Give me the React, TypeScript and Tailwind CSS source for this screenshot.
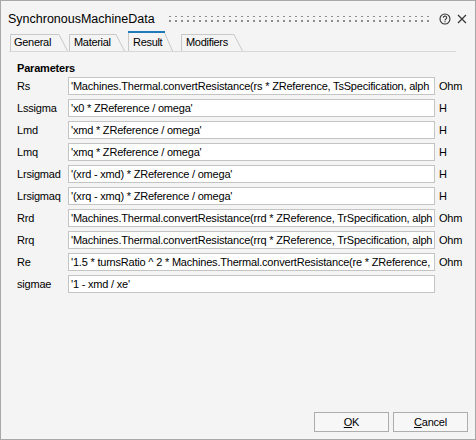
import React from "react";

const rows: [string, string, string][] = [
  ["Rs", "'Machines.Thermal.convertResistance(rs * ZReference, TsSpecification, alph", "Ohm"],
  ["Lssigma", "'x0 * ZReference / omega'", "H"],
  ["Lmd", "'xmd * ZReference / omega'", "H"],
  ["Lmq", "'xmq * ZReference / omega'", "H"],
  ["Lrsigmad", "'(xrd - xmd) * ZReference / omega'", "H"],
  ["Lrsigmaq", "'(xrq - xmq) * ZReference / omega'", "H"],
  ["Rrd", "'Machines.Thermal.convertResistance(rrd * ZReference, TrSpecification, alph", "Ohm"],
  ["Rrq", "'Machines.Thermal.convertResistance(rrq * ZReference, TrSpecification, alph", "Ohm"],
  ["Re", "'1.5 * turnsRatio ^ 2 * Machines.Thermal.convertResistance(re * ZReference,", "Ohm"],
  ["sigmae", "'1 - xmd / xe'", ""],
];

const font = "font-['Liberation_Sans',Arial,sans-serif]";

const TabOutline = ({ w, h }: { w: number; h: number }) => (
  <svg className="absolute inset-0" width={w} height={h}>
    <path d={`M0.5 ${h} V0.5 H${w - 9} L${w - 0.5} ${h}`} fill="none" stroke="#c8c8c8" />
  </svg>
);

export default function App() {
  return (
    <div className={`w-[476px] h-[440px] border border-[#a8a8a8] bg-[#f4f4f4] flex flex-col text-black ${font}`}>
      {/* title bar */}
      <div className="flex items-center h-[30px] pt-[6px] pl-[7px] pr-[8px]">
        <span className="text-[12.5px] leading-[16px]">SynchronousMachineData</span>
        <svg className="ml-[14px]" width="266" height="8">
          <defs>
            <pattern id="dots" width="6" height="5" patternUnits="userSpaceOnUse">
              <rect x="0" y="0" width="2" height="2" fill="#8c8c8c" />
            </pattern>
          </defs>
          <rect x="0" y="1" width="266" height="7" fill="url(#dots)" />
        </svg>
        <svg className="ml-[6px]" width="12" height="12" viewBox="0 0 12 12">
          <circle cx="6" cy="6" r="5" fill="none" stroke="#333" strokeWidth="1.1" />
          <path d="M4.3 4.8 a1.7 1.7 0 1 1 2.4 1.5 c-0.5 0.3 -0.7 0.6 -0.7 1.2" fill="none" stroke="#333" strokeWidth="1.1" />
          <rect x="5.5" y="8.2" width="1.1" height="1.1" fill="#333" />
        </svg>
        <svg className="ml-[6px]" width="10" height="10" viewBox="0 0 10 10">
          <path d="M1 1 L9 9 M9 1 L1 9" stroke="#333" strokeWidth="1.2" />
        </svg>
      </div>

      {/* tabs */}
      <div className="flex items-end h-[21px] ml-[8px] mr-[19px] pl-[1px] border-b border-[#d8d8d8] text-[11px] tracking-[-0.3px] leading-[13px]">
        <div className="relative w-[58px] h-[17px] flex items-center pl-[4px]">
          <TabOutline w={58} h={17} />
          <span className="relative">General</span>
        </div>
        <div className="relative ml-[1px] w-[56px] h-[17px] flex items-center pl-[5px]">
          <TabOutline w={56} h={17} />
          <span className="relative">Material</span>
        </div>
        <div className="relative ml-[3px] w-[45px] h-[20px] flex items-center pl-[5px] pt-[3px]">
          <TabOutline w={45} h={20} />
          <div className="absolute left-0 top-0 w-[37px] h-[2px] bg-[#1f7ab8]" />
          <span className="relative">Result</span>
        </div>
        <div className="relative ml-[8px] w-[62px] h-[17px] flex items-center pl-[5px]">
          <TabOutline w={62} h={17} />
          <span className="relative">Modifiers</span>
        </div>
      </div>

      {/* content */}
      <div className="pl-[16px] pr-[8px] pt-[10px] text-[11px] tracking-[-0.2px] leading-[13px]">
        <div className="font-bold h-[14px]">Parameters</div>
        <div className="flex flex-col gap-[4px] mt-[1px]">
          {rows.map(([name, value, unit]) => (
            <div key={name} className="flex items-center h-[18px]">
              <span className="w-[51px]">{name}</span>
              <div className="w-[367px] h-[18px] bg-white border border-[#c4c4c4] pl-[2px] flex items-center overflow-hidden whitespace-nowrap">
                {value}
              </div>
              <span className="ml-[4px]">{unit}</span>
            </div>
          ))}
        </div>
      </div>

      <div className="flex-1" />

      {/* buttons */}
      <div className="flex justify-end gap-[4px] pr-[7px] pb-[7px] text-[11px] tracking-[-0.2px]">
        <button className="w-[75px] h-[20px] bg-[#f7f7f7] border border-[#adadad] flex items-center justify-center">
          <span><span className="underline">O</span>K</span>
        </button>
        <button className="w-[75px] h-[20px] bg-[#f7f7f7] border border-[#adadad] flex items-center justify-center">
          <span><span className="underline">C</span>ancel</span>
        </button>
      </div>
    </div>
  );
}
